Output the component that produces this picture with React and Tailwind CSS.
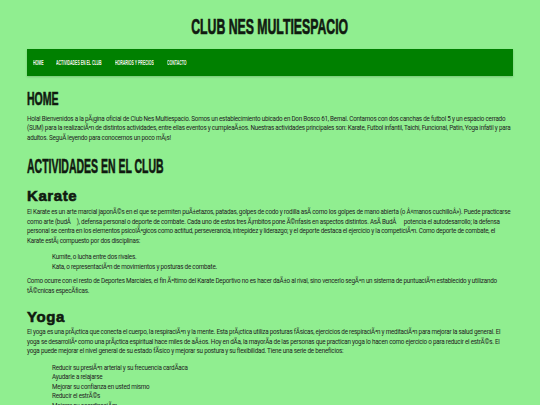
const headFont = { fontFamily: '"Liberation Sans", Arial, sans-serif' };
const bodyFont = { fontFamily: 'Roboto, "Liberation Sans", sans-serif' };

function Bebas({ scale, children, className = "" }) {
  return <span className={`inline-block whitespace-nowrap ${scale} ${className}`}>{children}</span>;
}

const P = ({ className = "", children }) => (
  <p className={`text-[6.3px] leading-[9.5px] tracking-[-0.23px] text-[#222] ${className}`}>{children}</p>
);

const UL = ({ className = "", children }) => (
  <ul className={`pl-[25px] text-[6.3px] leading-[9.5px] tracking-[-0.23px] text-[#222] ${className}`}>{children}</ul>
);

const navItems = [
  { t: "Home", w: "w-[10px]" },
  { t: "Actividades en el club", w: "w-[46px]" },
  { t: "Horarios y precios", w: "w-[39px]" },
  { t: "Contacto", w: "w-[19px]" },
];

export default function App() {
  return (
    <div className="h-[405px] w-[540px] overflow-hidden bg-[#90ee90]" style={bodyFont}>
      <header className="pt-[16px]">
        <h1
          className="h-[22px] text-center text-[22.3px] font-bold uppercase leading-[22px] text-[#101a10] [-webkit-text-stroke:0.7px_#101a10]"
          style={headFont}
        >
          <Bebas scale="origin-center scale-x-[0.55]">Club Nes Multiespacio</Bebas>
        </h1>
        <nav className="mx-[27px] mt-[11px] flex h-[27px] items-center gap-[13px] bg-[#008000] pl-[6px] shadow-[0_1px_2px_rgba(0,0,0,0.18)]">
          {navItems.map((n) => (
            <a key={n.t} className={`${n.w} text-[7px] font-bold uppercase leading-[7px] text-[#f4f4ec]`} style={headFont}>
              <Bebas scale="origin-left scale-x-[0.5]">{n.t}</Bebas>
            </a>
          ))}
        </nav>
      </header>
      <main className="px-[27px]">
        <h2
          className="mt-[13px] h-[19px] text-[18.5px] font-bold uppercase leading-[19px] text-[#101a10] [-webkit-text-stroke:0.6px_#101a10]"
          style={headFont}
        >
          <Bebas scale="origin-left scale-x-[0.57]">Home</Bebas>
        </h2>
        <P className="mt-[6.5px]">
          Hola! Bienvenidos a la pÃ¡gina oficial de Club Nes Multiespacio. Somos un establecimiento ubicado en Don Bosco 61, Bernal. Contamos con dos canchas de futbol 5 y un espacio cerrado (SUM) para la realizaciÃ³n de distintos actividades, entre ellas eventos y cumpleaÃ±os. Nuestras actividades principales son: Karate, Futbol infantil, Taichi, Funcional, Patin, Yoga infatil y para adultos. SeguÃ­ leyendo para conocernos un poco mÃ¡s!
        </P>
        <h2
          className="mt-[13.4px] h-[20px] text-[20px] font-bold uppercase leading-[20px] text-[#101a10] [-webkit-text-stroke:0.6px_#101a10]"
          style={headFont}
        >
          <Bebas scale="origin-left scale-x-[0.524]">Actividades en el club</Bebas>
        </h2>
        <h3 className="mt-[11.6px] h-[15px] text-[15px] font-bold leading-[15px] tracking-[0.6px] text-[#101a10] [-webkit-text-stroke:0.6px_#101a10]" style={headFont}>
          Karate
        </h3>
        <P className="mt-[5.1px]">
          El Karate es un arte marcial japonÃ©s en el que se permiten puÃ±etazos, patadas, golpes de codo y rodilla asÃ­ como los golpes de mano abierta (o Â«manos cuchilloÂ»). Puede practicarse como arte (budÅ{"\u2003"}), defensa personal o deporte de combate. Cada uno de estos tres Ã¡mbitos pone Ã©nfasis en aspectos distintos. AsÃ­ BudÅ{"\u2003"} potencia el autodesarrollo; la defensa personal se centra en los elementos psicolÃ³gicos como actitud, perseverancia, intrepidez y liderazgo; y el deporte destaca el ejercicio y la competiciÃ³n. Como deporte de combate, el Karate estÃ¡ compuesto por dos disciplinas:
        </P>
        <UL className="mt-[7px]">
          <li>Kumite, o lucha entre dos rivales.</li>
          <li>Kata, o representaciÃ³n de movimientos y posturas de combate.</li>
        </UL>
        <P className="mt-[5.4px]">
          Como ocurre con el resto de Deportes Marciales, el fin Ãºltimo del Karate Deportivo no es hacer daÃ±o al rival, sino vencerlo segÃºn un sistema de puntuaciÃ³n establecido y utilizando tÃ©cnicas especÃ­ficas.
        </P>
        <h3 className="mt-[12.2px] h-[15px] text-[15px] font-bold leading-[15px] tracking-[0.6px] text-[#101a10] [-webkit-text-stroke:0.6px_#101a10]" style={headFont}>
          Yoga
        </h3>
        <P className="mt-[4.4px]">
          El yoga es una prÃ¡ctica que conecta el cuerpo, la respiraciÃ³n y la mente. Esta prÃ¡ctica utiliza posturas fÃ­sicas, ejercicios de respiraciÃ³n y meditaciÃ³n para mejorar la salud general. El yoga se desarrollÃ³ como una prÃ¡ctica espiritual hace miles de aÃ±os. Hoy en dÃ­a, la mayorÃ­a de las personas que practican yoga lo hacen como ejercicio o para reducir el estrÃ©s. El yoga puede mejorar el nivel general de su estado fÃ­sico y mejorar su postura y su flexibilidad. Tiene una serie de beneficios:
        </P>
        <UL className="mt-[7.2px]">
          <li>Reducir su presiÃ³n arterial y su frecuencia cardÃ­aca</li>
          <li>Ayudarle a relajarse</li>
          <li>Mejorar su confianza en usted mismo</li>
          <li>Reducir el estrÃ©s</li>
          <li>Mejorar su coordinaciÃ³n</li>
        </UL>
      </main>
    </div>
  );
}
